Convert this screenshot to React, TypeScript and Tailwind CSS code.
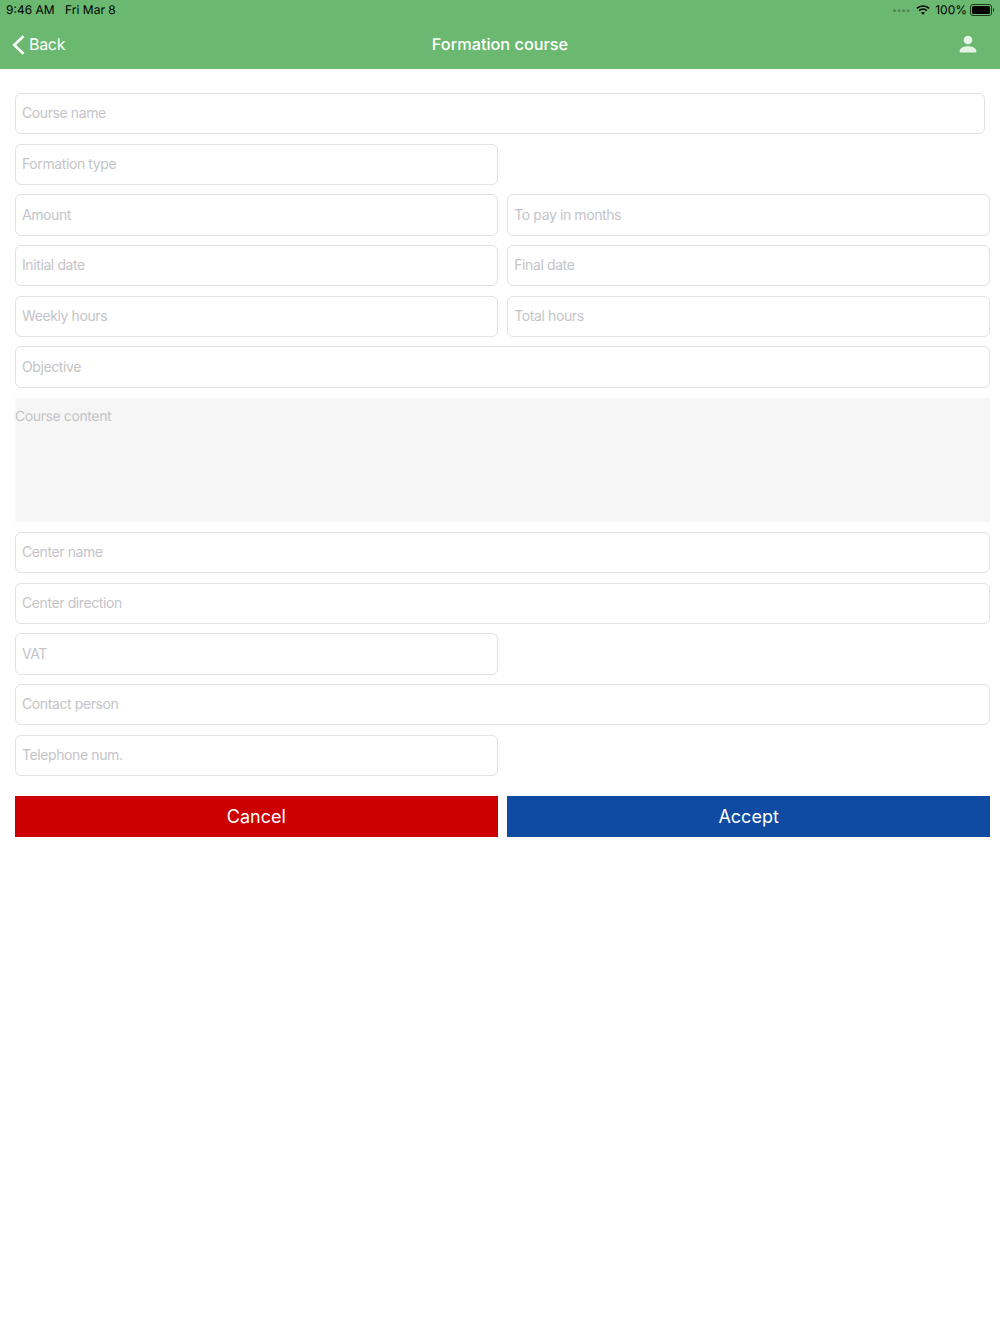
import React from "react";

const Field = ({ label, className = "" }: { label: string; className?: string }) => (
  <input
    placeholder={label}
    readOnly
    className={`h-[41.3px] min-w-0 rounded-[6px] border border-[#e2e2e2] bg-white px-[6px] pb-[1.5px] text-[14px] tracking-[-0.4px] outline-none placeholder:text-[#c4c4c8] ${className}`}
  />
);

const Row = ({ children }: { children: React.ReactNode }) => (
  <div className="grid grid-cols-2 gap-[9.5px]">{children}</div>
);

const Wifi = () => (
  <svg width="14" height="12" viewBox="0 0 15 12" fill="none" stroke="#000" strokeWidth="1.8">
    <path d="M1 4.2C4.6 .9 10.4 .9 14 4.2" />
    <path d="M3.4 6.6C5.7 4.6 9.3 4.6 11.6 6.6" />
    <path d="M7.5 11.2 5.4 8.9C6.6 8 8.4 8 9.6 8.9Z" fill="#000" stroke="none" />
  </svg>
);

const Battery = () => (
  <div className="ml-[-2px] flex items-center">
    <div className="h-[12px] w-[22px] rounded-[3px] border border-[#1c3a1c] p-[1px]">
      <div className="h-full w-full rounded-[1.5px] bg-black" />
    </div>
    <div className="ml-[0.5px] h-[4px] w-[1.5px] rounded-r-sm bg-[#1c3a1c]" />
  </div>
);

const Person = () => (
  <svg width="18" height="18" viewBox="0 0 18 18" fill="#e8f3e8" className="mt-[-2px]">
    <circle cx="9" cy="5" r="4.3" />
    <path d="M.7 17.4v-1.6c0-3.2 5.3-4.6 8.3-4.6s8.3 1.4 8.3 4.6v1.6Z" />
  </svg>
);

const BackChevron = () => (
  <svg width="13" height="20" viewBox="0 0 13 20" fill="none" stroke="#fff" strokeWidth="2.6">
    <path d="M11.5 1.2 2.2 10l9.3 8.8" />
  </svg>
);

export default function App() {
  return (
    <div className="min-h-[1334px] bg-white font-['Inter','Liberation_Sans',sans-serif] antialiased [text-rendering:geometricPrecision]">
      <header className="h-[69px] bg-[#6bb870]">
        <div className="flex h-[20px] items-center justify-between px-[6px] text-[12px] text-black">
          <div className="flex gap-[10.5px]">
            <span>9:46 AM</span>
            <span>Fri Mar 8</span>
          </div>
          <div className="flex items-center gap-[5px]">
            <span className="mr-[1px] text-[8px] leading-none text-[#4c8050]">••••</span>
            <Wifi />
            <span>100%</span>
            <Battery />
          </div>
        </div>
        <div className="relative flex h-[49px] items-center justify-between pl-[12px] pr-[23px] text-white">
          <div className="flex items-center gap-[4px] text-[16px] tracking-[-0.3px]">
            <BackChevron />
            <span className="mt-[-2px]">Back</span>
          </div>
          <div className="absolute inset-x-0 text-center text-[16.3px] font-medium">Formation course</div>
          <Person />
        </div>
      </header>

      <main className="flex flex-col gap-[9.4px] pl-[15px] pr-[10px] pt-[24px]">
        <Field label="Course name" className="mr-[5px]" />
        <Row>
          <Field label="Formation type" />
        </Row>
        <Row>
          <Field label="Amount" />
          <Field label="To pay in months" />
        </Row>
        <Row>
          <Field label="Initial date" />
          <Field label="Final date" />
        </Row>
        <Row>
          <Field label="Weekly hours" />
          <Field label="Total hours" />
        </Row>
        <Field label="Objective" />
        <div className="mt-[0.5px] mb-[1px] h-[124px] bg-[#f6f6f6] pt-[8px] text-[14px] tracking-[-0.4px] text-[#c4c4c8]">Course content</div>
        <Field label="Center name" />
        <Field label="Center direction" />
        <Row>
          <Field label="VAT" />
        </Row>
        <Field label="Contact person" />
        <Row>
          <Field label="Telephone num." />
        </Row>
        <div className="mt-[10.8px] grid grid-cols-2 gap-[9.5px] text-[18px] text-white">
          <button className="h-[41px] bg-[#cc0000]">Cancel</button>
          <button className="h-[41px] bg-[#0f4aa3]">Accept</button>
        </div>
      </main>
    </div>
  );
}
